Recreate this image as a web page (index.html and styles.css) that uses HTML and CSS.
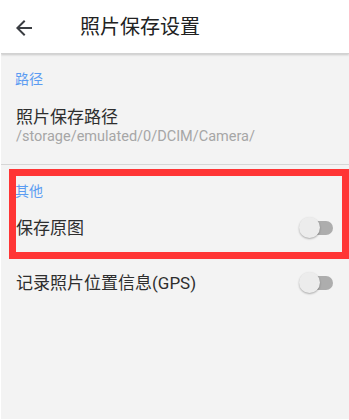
FILE: index.html
```html
<!DOCTYPE html>
<html lang="zh">
<head>
<meta charset="utf-8">
<title>照片保存设置</title>
<link rel="stylesheet" href="styles.css">
</head>
<body>
<div class="page">
  <header class="appbar">
    <svg class="back" width="24" height="24" viewBox="0 0 24 24"><path d="M20 11H7.83l5.59-5.59L12 4l-8 8 8 8 1.41-1.41L7.83 13H20v-2z" fill="#3a3d42"/></svg>
    <div class="title">照片保存设置</div>
  </header>
  <main class="content">
    <div class="group-label first">路径</div>
    <div class="item">
      <div class="item-title">照片保存路径</div>
      <div class="item-sub">/storage/emulated/0/DCIM/Camera/</div>
    </div>
    <div class="divider"></div>
    <div class="group-label">其他</div>
    <div class="row">
      <span class="row-title">保存原图</span>
      <span class="switch"><span class="thumb"></span></span>
    </div>
    <div class="row">
      <span class="row-title">记录照片位置信息(GPS)</span>
      <span class="switch"><span class="thumb"></span></span>
    </div>
    <div class="highlight"></div>
  </main>
</div>
</body>
</html>
```
FILE: styles.css
```css
html, body {
  margin: 0;
  padding: 0;
}
body {
  background: #ffffff;
  font-family: Roboto, "Noto Sans CJK SC", sans-serif;
  color: #2e2e2e;
}
.page {
  width: 348px;
  height: 419px;
  margin-left: 1px;
  background: #f3f3f3;
  display: flex;
  flex-direction: column;
  overflow: hidden;
}
.appbar {
  height: 53px;
  background: #ffffff;
  border-bottom: 1px solid #d2d2d2;
  box-shadow: 0 1px 2px rgba(0,0,0,0.18);
  display: flex;
  align-items: center;
  flex-shrink: 0;
  position: relative;
  z-index: 1;
}
.back {
  margin-left: 11px;
  margin-top: 2px;
}
.title {
  margin-left: 44px;
  font-size: 20px;
  color: #222;
  line-height: 24px;
  margin-top: 1px;
}
.content {
  position: relative;
  flex: 1;
}
.group-label {
  padding: 16px 0 0 14px;
  font-size: 14px;
  line-height: 20px;
  color: #5c9cf2;
}
.group-label.first {
  padding-top: 15px;
}
.item {
  padding: 18px 15px 18px 15px;
}
.item-title {
  font-size: 17px;
  line-height: 21px;
  color: #2e2e2e;
}
.item-sub {
  font-size: 14.5px;
  line-height: 18px;
  color: #a6a6a6;
}
.divider {
  height: 1px;
  background: #d6d6d6;
}
.row {
  height: 55px;
  display: flex;
  align-items: center;
  justify-content: space-between;
  padding: 0 16px 0 15px;
}
.row-title {
  font-size: 17px;
  line-height: 21px;
}
.switch {
  position: relative;
  width: 33px;
  height: 14px;
  border-radius: 7px;
  background: #adadad;
  margin-top: -1px;
}
.thumb {
  position: absolute;
  left: -1px;
  top: -4px;
  width: 21px;
  height: 21px;
  border-radius: 50%;
  background: #ececec;
  box-shadow: 0 1px 2px rgba(0,0,0,0.3);
}
.highlight {
  position: absolute;
  left: 8px;
  top: 115px;
  width: 340px;
  height: 90px;
  box-sizing: border-box;
  border: 7px solid #ff3535;
  pointer-events: none;
}
```
